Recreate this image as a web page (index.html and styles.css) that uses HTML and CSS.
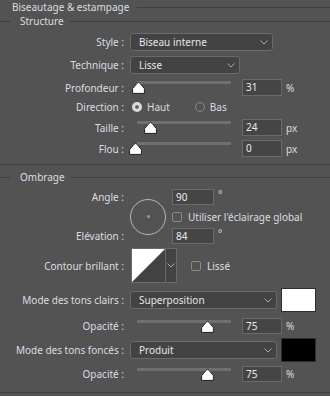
FILE: index.html
```html
<!DOCTYPE html>
<html lang="fr">
<head>
<meta charset="utf-8">
<link rel="stylesheet" href="styles.css">
</head>
<body>
<div class="panel">
  <div class="title"><span>Biseautage &amp; estampage</span><i class="rule"></i></div>

  <div class="group structure">
    <div class="legend"><i class="lead"></i><span>Structure</span><i class="rule"></i></div>

    <div class="row r-select r-style">
      <label>Style :</label>
      <div class="select w-style"><span>Biseau interne</span><svg class="chev" viewBox="0 0 8 5"><path d="M0.5 0.5 L4 4 L7.5 0.5"/></svg></div>
    </div>

    <div class="row r-select r-tech">
      <label>Technique :</label>
      <div class="select w-tech"><span>Lisse</span><svg class="chev" viewBox="0 0 8 5"><path d="M0.5 0.5 L4 4 L7.5 0.5"/></svg></div>
    </div>

    <div class="row r-slider r-prof">
      <label>Profondeur :</label>
      <div class="ctrl">
        <div class="slider"><i class="track"></i><svg class="handle" style="left:1.5px" viewBox="0 0 13 12"><path d="M6.5 0.6 C7.3 0.6 8 1.4 8.6 2.1 L12.2 6.3 C12.4 6.6 12.4 6.8 12.4 7.1 V11.4 H0.6 V7.1 C0.6 6.8 0.6 6.6 0.8 6.3 L4.4 2.1 C5 1.4 5.7 0.6 6.5 0.6 Z"/></svg></div>
        <div class="input">31</div><span class="unit">%</span>
      </div>
    </div>

    <div class="row r-dir">
      <label>Direction :</label>
      <div class="ctrl radios">
        <span class="radio on"></span><span class="rtext">Haut</span>
        <span class="radio off"></span><span class="rtext">Bas</span>
      </div>
    </div>

    <div class="row r-slider r-taille">
      <label>Taille :</label>
      <div class="ctrl">
        <div class="slider"><i class="track"></i><svg class="handle" style="left:13.5px" viewBox="0 0 13 12"><path d="M6.5 0.6 C7.3 0.6 8 1.4 8.6 2.1 L12.2 6.3 C12.4 6.6 12.4 6.8 12.4 7.1 V11.4 H0.6 V7.1 C0.6 6.8 0.6 6.6 0.8 6.3 L4.4 2.1 C5 1.4 5.7 0.6 6.5 0.6 Z"/></svg></div>
        <div class="input">24</div><span class="unit">px</span>
      </div>
    </div>

    <div class="row r-slider r-flou">
      <label>Flou :</label>
      <div class="ctrl">
        <div class="slider"><i class="track"></i><svg class="handle" style="left:-1.5px" viewBox="0 0 13 12"><path d="M6.5 0.6 C7.3 0.6 8 1.4 8.6 2.1 L12.2 6.3 C12.4 6.6 12.4 6.8 12.4 7.1 V11.4 H0.6 V7.1 C0.6 6.8 0.6 6.6 0.8 6.3 L4.4 2.1 C5 1.4 5.7 0.6 6.5 0.6 Z"/></svg></div>
        <div class="input">0</div><span class="unit">px</span>
      </div>
    </div>
  </div>

  <div class="group ombrage">
    <div class="legend"><i class="lead"></i><span>Ombrage</span><i class="rule"></i></div>

    <div class="angle-block">
      <label class="l-angle">Angle :</label>
      <label class="l-elev">Elévation :</label>
      <div class="dial"><i class="dot"></i></div>
      <div class="a-in"><div class="input small">90</div><span class="deg">°</span></div>
      <div class="a-check"><span class="check"></span><span class="ctext">Utiliser l'éclairage global</span></div>
      <div class="e-in"><div class="input small">84</div><span class="deg">°</span></div>
    </div>

    <div class="row r-contour">
      <label>Contour brillant :</label>
      <div class="ctrl">
        <div class="contour">
          <svg class="curve" viewBox="0 0 33 33" preserveAspectRatio="none"><rect width="33" height="33" fill="#434343"/><path d="M0 0 H33 L0 33 Z" fill="#ffffff"/></svg>
          <div class="cdrop"><svg class="chev" viewBox="0 0 8 5"><path d="M0.5 0.5 L4 4 L7.5 0.5"/></svg></div>
        </div>
        <span class="check"></span><span class="ctext">Lissé</span>
      </div>
    </div>

    <div class="row r-mode r-clairs">
      <label>Mode des tons clairs :</label>
      <div class="ctrl">
        <div class="select w-mode"><span>Superposition</span><svg class="chev" viewBox="0 0 8 5"><path d="M0.5 0.5 L4 4 L7.5 0.5"/></svg></div>
        <div class="swatch white"></div>
      </div>
    </div>

    <div class="row r-slider r-op1">
      <label>Opacité :</label>
      <div class="ctrl">
        <div class="slider"><i class="track"></i><svg class="handle" style="left:71px" viewBox="0 0 13 12"><path d="M6.5 0.6 C7.3 0.6 8 1.4 8.6 2.1 L12.2 6.3 C12.4 6.6 12.4 6.8 12.4 7.1 V11.4 H0.6 V7.1 C0.6 6.8 0.6 6.6 0.8 6.3 L4.4 2.1 C5 1.4 5.7 0.6 6.5 0.6 Z"/></svg></div>
        <div class="input">75</div><span class="unit">%</span>
      </div>
    </div>

    <div class="row r-mode r-fonces">
      <label>Mode des tons foncés :</label>
      <div class="ctrl">
        <div class="select w-mode"><span>Produit</span><svg class="chev" viewBox="0 0 8 5"><path d="M0.5 0.5 L4 4 L7.5 0.5"/></svg></div>
        <div class="swatch black"></div>
      </div>
    </div>

    <div class="row r-slider r-op2">
      <label>Opacité :</label>
      <div class="ctrl">
        <div class="slider"><i class="track"></i><svg class="handle" style="left:71px" viewBox="0 0 13 12"><path d="M6.5 0.6 C7.3 0.6 8 1.4 8.6 2.1 L12.2 6.3 C12.4 6.6 12.4 6.8 12.4 7.1 V11.4 H0.6 V7.1 C0.6 6.8 0.6 6.6 0.8 6.3 L4.4 2.1 C5 1.4 5.7 0.6 6.5 0.6 Z"/></svg></div>
        <div class="input">75</div><span class="unit">%</span>
      </div>
    </div>
  </div>
</div>
</body>
</html>
```

FILE: styles.css
```css
* { box-sizing: border-box; }
html, body { margin: 0; padding: 0; }
body {
  width: 330px;
  height: 396px;
  background: #535353;
  color: #d9dde2;
  font-family: "Noto Sans", "DejaVu Sans", sans-serif;
  font-size: 10px;
  overflow: hidden;
}
.panel { display: flex; flex-direction: column; }

.rule { flex: 1; height: 1px; background: #3f3f3f; }
.lead { width: 10px; height: 1px; background: #3f3f3f; }

.title {
  height: 14px;
  display: flex;
  align-items: center;
  padding-left: 12px;
  gap: 8px;
  line-height: 14px;
}
.legend {
  height: 14px;
  display: flex;
  align-items: center;
  line-height: 14px;
}
.legend span { margin: 0 6px 0 10px; }

.structure {
  border-bottom: 1px solid #3f3f3f;
  padding-bottom: 7px;
}
.ombrage {
  margin-top: 5px;
  border-bottom: 1px solid #3f3f3f;
  padding-bottom: 10px;
}

.row {
  display: grid;
  grid-template-columns: 124px 1fr;
  column-gap: 6px;
  align-items: center;
}
.row label { text-align: right; white-space: nowrap; }
.ctrl { display: flex; align-items: center; }

.r-style { margin-top: 5px; height: 18px; }
.r-tech { margin-top: 5px; height: 18px; }
.r-prof { margin-top: 5px; height: 17px; }
.r-dir { margin-top: 4px; height: 14px; }
.r-taille { margin-top: 5px; height: 17px; }
.r-flou { margin-top: 4px; height: 17px; }

.select {
  height: 18px;
  background: #434343;
  border: 1px solid #6a6a6a;
  border-radius: 3px;
  display: flex;
  align-items: center;
  justify-content: space-between;
  padding: 0 4px 0 8px;
  color: #e4e6ea;
}
.w-style { width: 143px; }
.w-tech { width: 110px; }
.w-mode { width: 147px; }
.chev { width: 8px; height: 5px; fill: none; stroke: #a9a9a9; stroke-width: 1; }

.slider { position: relative; width: 101px; height: 17px; margin-right: 11px; }
.track {
  position: absolute;
  left: 7px; top: 2px;
  width: 94px; height: 3px;
  background: #6f6f6f;
}
.handle {
  position: absolute;
  top: 3px;
  width: 13px; height: 12px;
  fill: #ffffff;
  stroke: #1f1f1f;
  stroke-width: 1;
}
.input {
  width: 40px;
  height: 17px;
  background: #454545;
  border: 1px solid #6a6a6a;
  padding-left: 3px;
  line-height: 15px;
  color: #e8ebef;
}
.input.small { width: 42px; height: 16px; line-height: 14px; }
.unit { margin-left: 4px; }

.radios { height: 14px; }
.radio {
  width: 10px; height: 10px; border-radius: 50%;
  margin-left: 2px;
}
.radio.on { border: 3px solid #dcdcdc; box-shadow: inset 0 0 0 1px #777; background: #555; }
.radio.off { border: 1px solid #8a8a8a; margin-left: 25px; }
.rtext { margin-left: 5px; }

.angle-block {
  margin-top: 5px;
  display: grid;
  grid-template-columns: 124px 36px auto;
  grid-template-rows: 16px 23px 16px;
  column-gap: 6px;
  align-items: center;
}
.l-angle { grid-column: 1; grid-row: 1; text-align: right; }
.l-elev { grid-column: 1; grid-row: 3; text-align: right; }
.dial {
  grid-column: 2; grid-row: 1 / 4;
  width: 36px; height: 36px;
  border: 1px solid #b8b8b8;
  border-radius: 50%;
  display: flex; align-items: center; justify-content: center;
}
.dot { width: 3px; height: 3px; border-radius: 50%; background: #9a9a9a; }
.a-in, .e-in { display: flex; align-items: flex-start; height: 16px; }
.a-in { grid-column: 3; grid-row: 1; }
.e-in { grid-column: 3; grid-row: 3; }
.a-check { grid-column: 3; grid-row: 2; display: flex; align-items: center; }
.deg { margin-left: 4px; line-height: 10px; font-size: 10px; }

.check {
  width: 10px; height: 10px;
  border: 1px solid #8a8a8a;
  border-radius: 2px;
}
.ctext { margin-left: 6px; }

.r-contour { margin-top: 4px; height: 35px; }
.contour {
  margin-left: 1px;
  width: 46px; height: 35px;
  border: 1px solid #6a6a6a;
  display: flex;
  background: #434343;
}
.curve { width: 33px; height: 33px; display: block; }
.cdrop {
  flex: 1;
  border-left: 1px solid #6a6a6a;
  display: flex; align-items: center; justify-content: center;
}
.r-contour .check { margin-left: 14px; }

.r-mode { height: 24px; }
.r-clairs { margin-top: 5px; }
.r-fonces { margin-top: 4px; }
.swatch {
  width: 35px; height: 24px;
  margin-left: 4px;
  border: 1px solid #2f2f2f;
}
.swatch.white { background: #ffffff; }
.swatch.black { background: #000000; }

.r-op1 { margin-top: 6px; height: 16px; }
.r-op2 { margin-top: 4px; height: 16px; }
.r-op1 .input, .r-op2 .input { height: 16px; line-height: 14px; }
.r-op1 .slider, .r-op2 .slider { height: 16px; }
```
